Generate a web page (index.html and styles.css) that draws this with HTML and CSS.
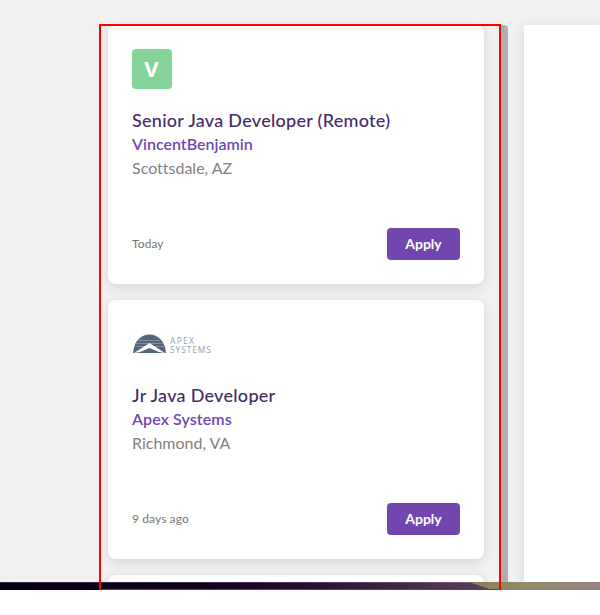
FILE: index.html
```
<!DOCTYPE html>
<html lang="en">
<head>
<meta charset="utf-8">
<title>Java Developer Jobs</title>
<link rel="stylesheet" href="styles.css">
</head>
<body>
<div class="screen">
  <main class="content">
    <section class="results">
      <article class="card">
        <div class="logo"><span class="initial">V</span></div>
        <h2 class="title">Senior Java Developer (Remote)</h2>
        <div class="company">VincentBenjamin</div>
        <div class="location">Scottsdale, AZ</div>
        <div class="footer"><span class="date">Today</span><button class="apply">Apply</button></div>
      </article>
      <article class="card">
        <div class="logo">
          <svg class="apex" width="80" height="40" viewBox="0 0 80 40">
            <path class="dome" d="M1 29C2 17 9 10.500 17.500 10.500S33 17 34 29Z"/>
            <path class="stripes" d="M5 16.500H30M3 19.500H32M2 22.500H33"/>
            <path class="peak" d="M2 29L17.500 19L33 29L27 28L17.500 24L8 28Z"/>
            <text class="brand" x="38" y="19.700" textLength="24">APEX</text>
            <text class="brand" x="38" y="28.700" textLength="41">SYSTEMS</text>
          </svg>
        </div>
        <h2 class="title">Jr Java Developer</h2>
        <div class="company spaced">Apex Systems</div>
        <div class="location">Richmond, VA</div>
        <div class="footer"><span class="date">9 days ago</span><button class="apply">Apply</button></div>
      </article>
      <article class="card"></article>
    </section>
    <div class="scrollbar"></div>
    <section class="detail"></section>
  </main>
  <div class="desktop">
    <svg class="wallpaper" width="600" height="8" viewBox="0 0 600 8">
      <defs>
        <linearGradient id="night"><stop offset="0" stop-color="#070015"/><stop offset=".34" stop-color="#11001f"/><stop offset=".52" stop-color="#280e32"/><stop offset=".8" stop-color="#5c3c5b"/></linearGradient>
        <linearGradient id="glow"><stop offset="0" stop-color="#85804f"/><stop offset=".4" stop-color="#908b68"/><stop offset="1" stop-color="#968484"/></linearGradient>
      </defs>
      <path fill="url(#night)" d="M0 0H600V8H0Z"/>
      <path fill="url(#glow)" d="M469 0H600V8H492Z"/>
      <path stroke="#fff" stroke-opacity=".18" d="M0 .5H470"/>
    </svg>
  </div>
  <div class="highlight"></div>
</div>
</body>
</html>
```
FILE: styles.css
```
* { box-sizing: border-box; }
body { margin: 0; background: #fff; font-family: Lato, "Liberation Sans", sans-serif; font-variant-ligatures: none; }
.screen { position: relative; width: 600px; height: 590px; overflow: hidden; }
.content { display: flex; height: 582px; padding: 25px 0 0 108px; background: #f1f1f1; overflow: hidden; }
.results { display: flex; flex-direction: column; gap: 16px; width: 376px; }
.card { flex: none; height: 259px; padding: 24px; background: #fff; border-radius: 8px; box-shadow: 0 3px 12px rgba(0,0,0,.12); }
.logo { height: 40px; margin-bottom: 19px; }
.initial { display: block; width: 40px; height: 40px; border-radius: 4px; background: #84d397; color: #fff; font: 700 22px/39px "Open Sans", sans-serif; text-align: center; padding-right: 1px; }
.apex { display: block; }
.dome { fill: #53667c; }
.stripes { stroke: #8c9bab; stroke-width: .8; }
.peak { fill: #fff; }
.brand { fill: #8d9fad; font: 8.5px/9px "Open Sans", sans-serif; }
.title, .company, .location { margin: 0; height: 24px; line-height: 24px; white-space: nowrap; }
.title { font-size: 18px; font-weight: 500; letter-spacing: .28px; color: #452a68; }
.company { font-size: 16px; font-weight: 600; color: #7247b0; }
.company.spaced { letter-spacing: .1px; }
.location { font-size: 16px; color: #808080; }
.footer { display: flex; align-items: center; justify-content: space-between; margin-top: 48px; height: 32px; }
.date { position: relative; top: -1px; font-size: 12px; letter-spacing: .1px; color: #767676; }
.apply { width: 73px; height: 32px; padding: 0; border: 0; border-radius: 4px; background: #7047ae; color: #fff; font: 700 14px/32px Lato, sans-serif; }
.scrollbar { width: 7px; margin-left: 17px; background: #afafaf; border-radius: 0 4px 0 0; }
.detail { flex: 1; margin-left: 16px; background: #fff; box-shadow: 0 3px 12px rgba(0,0,0,.12); }
.desktop { height: 8px; }
.wallpaper { display: block; }
.highlight { position: absolute; left: 99px; top: 24px; width: 402px; height: 567px; border: 2px solid #f00; }
```
